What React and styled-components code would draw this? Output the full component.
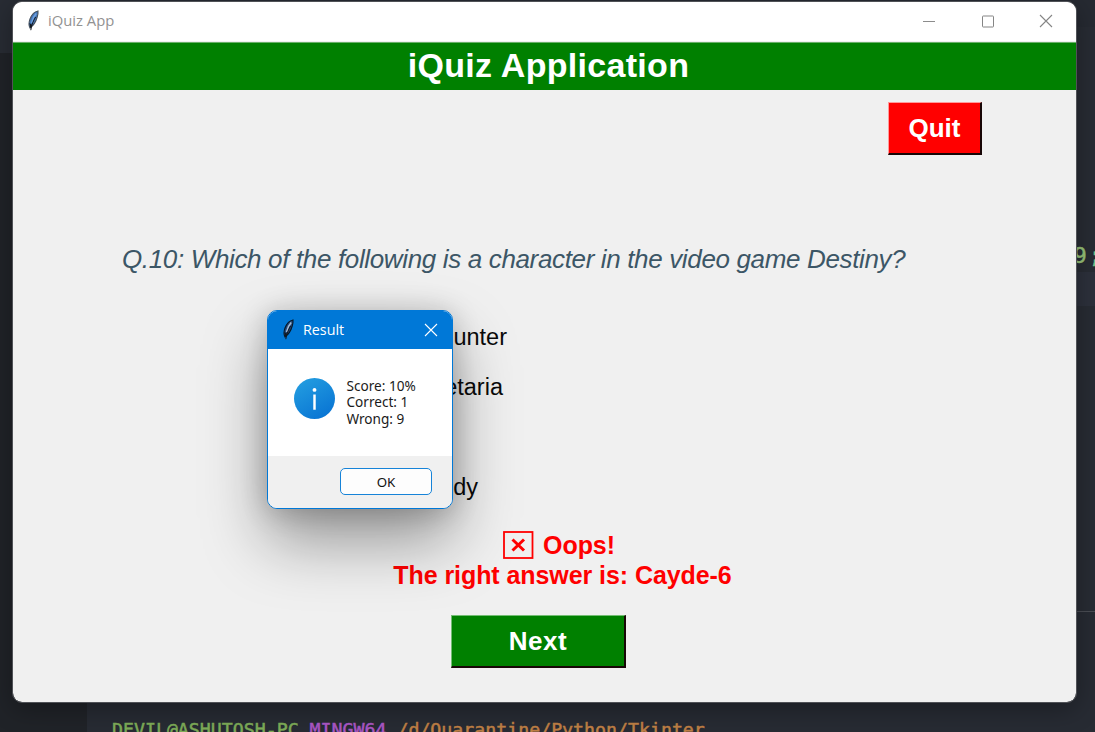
import React from "react";
import styled, { createGlobalStyle } from "styled-components";

const Global = createGlobalStyle`
  * { box-sizing: border-box; }
  html, body { margin: 0; overflow: hidden; background: #282c34; }
`;

const Desktop = styled.div`
  position: relative;
  width: 1095px;
  height: 732px;
  overflow: hidden;
  display: grid;
  grid-template-columns: 87px 1fr;
  background: #272b33;
`;
const ActivityBar = styled.div`
  background: #202328;
  border-top: 53px solid #282c34;
`;
const Editor = styled.div`
  display: flex;
  flex-direction: column;
`;
const EditorTabs = styled.div`
  height: 27px;
  background: #262a32;
`;
const CodePane = styled.div`
  height: 585px;
  padding-top: 213px;
  background: #282c34;
  border-bottom: 1px solid #4a4d54;
`;
const CodeLine = styled.div`
  display: flex;
  justify-content: flex-end;
  height: 31px;
  margin-right: -7px;
  font: 22px/31px "DejaVu Sans Mono", monospace;
  color: #98c379;
  -webkit-text-stroke: 0.5px;
  white-space: pre;
`;
const CodeMark = styled.span`
  margin-left: 2px;
  color: #75c98e;
`;
const CurrentLine = styled.div`
  height: 34px;
  margin-top: 1px;
  background: #2d313c;
`;
const Terminal = styled.div`
  flex: 1;
  padding: 106px 0 0 25px;
  font: 18.24px/24px "DejaVu Sans Mono", monospace;
  -webkit-text-stroke: 0.5px;
  white-space: pre;
  overflow: hidden;
  border-bottom: 1px solid #211a23;
`;
const Segment = styled.span`
  color: ${(p) => p.$color};
`;

const AppWindow = styled.div`
  position: absolute;
  left: 12px;
  top: 1px;
  width: 1065px;
  height: 702px;
  border: 1px solid #505257;
  border-radius: 10px;
  background: #f0f0f0;
  background-clip: padding-box;
  box-shadow: 0 6px 26px rgba(0, 0, 0, 0.32);
  overflow: hidden;
  display: flex;
  flex-direction: column;
  font-family: "Liberation Sans", Arial, sans-serif;
`;
const TitleBar = styled.div`
  height: 39px;
  flex: none;
  display: flex;
  align-items: center;
  padding: 0 23px 1px 12px;
  background: #fff;
`;
const WindowTitle = styled.span`
  margin-left: 6px;
  flex: 1;
  font: 14.8px/20px "Open Sans", sans-serif;
  color: #929292;
  position: relative;
  top: -1px;
`;
const Controls = styled.div`
  display: flex;
  gap: 44.5px;
`;
const Heading = styled.h1`
  flex: none;
  height: 48px;
  margin: 1px 0 0;
  padding-left: 8px;
  border-top: 1px solid #69b069;
  background: #008000;
  color: #fff;
  text-align: center;
  font-size: 34px;
  line-height: 45px;
  letter-spacing: 0.3px;
`;
const TkButton = styled.button`
  display: block;
  width: ${(p) => p.$width}px;
  height: 53px;
  padding: 0;
  border: 2px solid;
  border-width: 1px 2px 2px 1px;
  border-color: ${(p) => p.$light} #180606 #180606 ${(p) => p.$light};
  background: ${(p) => p.$color};
  color: #fff;
  font: bold 26px/49px "Liberation Sans", Arial, sans-serif;
  letter-spacing: ${(p) => p.$spacing || 0}px;
`;
const QuitRow = styled.div`
  display: flex;
  justify-content: flex-end;
  padding: 12px 94px 0 0;
`;
const Question = styled.p`
  margin: 88px 0 0 109px;
  font-size: 26px;
  font-style: italic;
  line-height: 32px;
  letter-spacing: ${(p) => p.$spacing}px;
  color: #3c5666;
  white-space: nowrap;
`;
const Options = styled.div`
  margin-top: 37px;
  height: 200px;
  flex: none;
`;
const Option = styled.div`
  height: 50px;
  padding-top: 10px;
  width: ${(p) => p.$end}px;
  text-align: right;
  font-size: 23.5px;
  line-height: 30px;
  color: #0a0a0a;
`;
const Feedback = styled.div`
  margin-top: 18px;
  padding-left: 36px;
  text-align: center;
  font-weight: bold;
  font-size: 25px;
  line-height: 30px;
  color: #f00;
  letter-spacing: ${(p) => p.$spacing}px;
`;
const Oops = styled.div`
  display: flex;
  justify-content: center;
  align-items: center;
  gap: 9px;
  padding-right: 7px;
`;
const NextRow = styled.div`
  margin: 25px 0 0 438px;
`;

const Dialog = styled.div`
  position: absolute;
  left: 267px;
  top: 310px;
  width: 186px;
  height: 199px;
  border: 1px solid #0078d7;
  border-radius: 10px;
  overflow: hidden;
  background: #fff;
  box-shadow: 0 32px 64px rgba(0, 0, 0, 0.38), 0 2px 28px rgba(0, 0, 0, 0.2);
`;
const DialogBar = styled.div`
  height: 38px;
  display: flex;
  align-items: center;
  padding: 0 14px 0 12px;
  background: #0078d7;
`;
const DialogTitle = styled.span`
  flex: 1;
  margin-left: 6px;
  font: 14.3px/20px "Open Sans", sans-serif;
  color: #fff;
`;
const DialogBody = styled.div`
  height: 107px;
  display: flex;
  align-items: flex-start;
  gap: 11.5px;
  padding: 29px 0 0 26px;
`;
const Score = styled.div`
  font: 13.6px/16.4px "Noto Sans", sans-serif;
  color: #1a1a1a;
  white-space: pre;
`;
const DialogFooter = styled.div`
  height: 52px;
  display: flex;
  justify-content: flex-end;
  padding: 12px 20px 0 0;
  background: #f0f0f0;
`;
const OkButton = styled.button`
  width: 92px;
  height: 27px;
  padding: 0;
  border: 1.5px solid #1683d8;
  border-radius: 5px;
  background: #fdfdfd;
  color: #111;
  font: 13.3px/22px "Noto Sans", sans-serif;
`;

const Feather = ({ dark }) => (
  <svg width="17" height="22" viewBox="0 0 17 22">
    <path
      d="M13 1 C9.6 1.6 6.8 4.5 5 9 C3.8 12.2 3.6 15.5 5 18 C8.6 15.4 11 11.5 12.2 7 C12.9 4.6 13.2 2.6 13 1Z"
      fill={dark ? "#244a7c" : "#4377bb"}
      stroke={dark ? "#071726" : "#46505c"}
      strokeWidth="1.1"
    />
    <path d="M11.2 3.5 C8.9 6 7.4 9 6.6 13" stroke={dark ? "#a8bdd6" : "#6fa0e0"} strokeWidth="1.6" fill="none" />
    <path d="M10.6 7 C8.4 11 6.6 14 5.8 20.2" stroke="#10151c" strokeWidth="1" fill="none" />
    <path d="M4.4 13 L5.3 18.5 L7.2 15" fill="#14191f" />
  </svg>
);

const CloseIcon = ({ color }) => (
  <svg width="14" height="14" viewBox="0 0 14 14" stroke={color} strokeWidth="1.1">
    <path d="M1 1 L13 13 M13 1 L1 13" />
  </svg>
);

const InfoIcon = () => (
  <svg width="41" height="41" viewBox="0 0 40 40">
    <defs>
      <linearGradient id="info" x1="0.2" y1="0" x2="0.8" y2="1">
        <stop offset="0" stopColor="#239de0" />
        <stop offset="1" stopColor="#0873d3" />
      </linearGradient>
    </defs>
    <circle cx="20" cy="20" r="20" fill="url(#info)" />
    <circle cx="20" cy="11.6" r="1.9" fill="#fff" />
    <path d="M20 16 V31" stroke="#fff" strokeWidth="2.4" />
  </svg>
);

const CrossBox = () => (
  <svg width="31" height="28" viewBox="0 0 31 28" fill="none" stroke="#f00">
    <rect x="1" y="1" width="28.5" height="26" strokeWidth="1.8" />
    <path d="M9.5 8.5 L21 19.5 M21 8.5 L9.5 19.5" strokeWidth="3" />
  </svg>
);

export default function App() {
  return (
    <>
      <Global />
      <Desktop>
        <ActivityBar />
        <Editor>
          <EditorTabs />
          <CodePane>
            <CodeLine>9<CodeMark>;</CodeMark></CodeLine>
            <CurrentLine />
          </CodePane>
          <Terminal>
            <Segment $color="#7eac58">DEVIL@ASHUTOSH-PC </Segment>
            <Segment $color="#ab57c6">MINGW64 </Segment>
            <Segment $color="#c08045">/d/Quarantine/Python/Tkinter</Segment>
          </Terminal>
        </Editor>

        <AppWindow>
          <TitleBar>
            <Feather />
            <WindowTitle>iQuiz App</WindowTitle>
            <Controls>
              <svg width="14" height="14" stroke="#8c8c8c"><path d="M1 7.5 H13" /></svg>
              <svg width="14" height="14" stroke="#858585" fill="none"><rect x="1.5" y="2" width="11" height="11" rx="0.6" /></svg>
              <CloseIcon color="#858585" />
            </Controls>
          </TitleBar>
          <Heading>iQuiz Application</Heading>
          <QuitRow>
            <TkButton $width={94} $color="#ff0000" $light="#ff9a9a">Quit</TkButton>
          </QuitRow>
          <Question $spacing={-0.35}>
            Q.10: Which of the following is a character in the video game Destiny?
          </Question>
          <Options>
            <Option $end={494}>Hunter</Option>
            <Option $end={490}>etaria</Option>
            <Option $end={490} />
            <Option $end={465}>dy</Option>
          </Options>
          <Feedback $spacing={-0.07}>
            <Oops><CrossBox />Oops!</Oops>
            <div>The right answer is: Cayde-6</div>
          </Feedback>
          <NextRow>
            <TkButton $width={175} $color="#008000" $light="#73bd73" $spacing={0.5}>Next</TkButton>
          </NextRow>
        </AppWindow>

        <Dialog>
          <DialogBar>
            <Feather dark />
            <DialogTitle>Result</DialogTitle>
            <CloseIcon color="#fff" />
          </DialogBar>
          <DialogBody>
            <InfoIcon />
            <Score>{"Score: 10%\nCorrect: 1\nWrong: 9"}</Score>
          </DialogBody>
          <DialogFooter>
            <OkButton>OK</OkButton>
          </DialogFooter>
        </Dialog>
      </Desktop>
    </>
  );
}
